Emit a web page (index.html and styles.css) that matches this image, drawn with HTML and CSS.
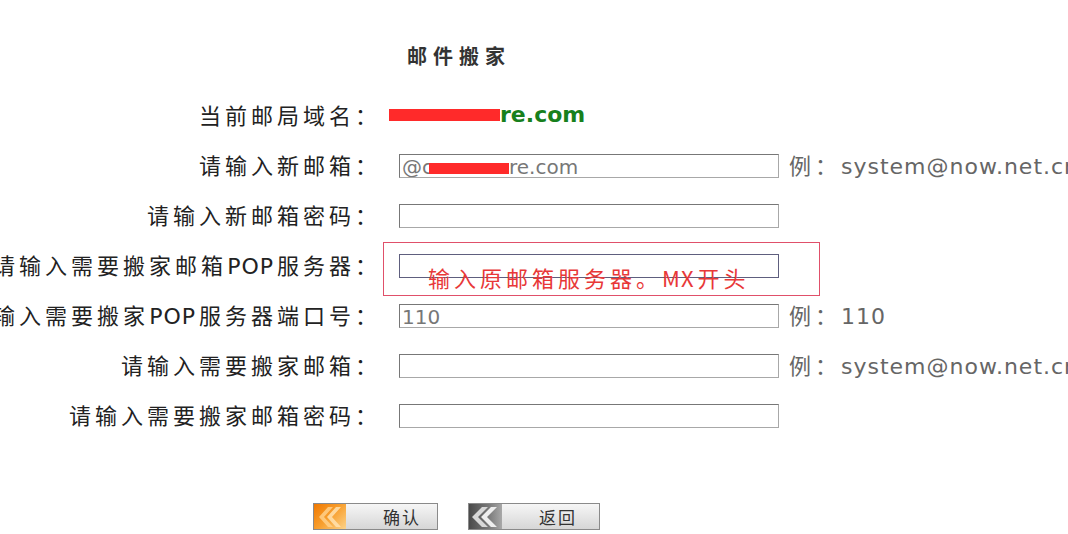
FILE: index.html
```html
<!DOCTYPE html>
<html lang="zh-CN">
<head>
    <meta charset="UTF-8">
    <title>邮件搬家</title>
    <link rel="stylesheet" href="styles.css">
</head>
<body>
    <div class="page">
        <h2 class="title">邮件搬家</h2>

        <div class="form">
            <div class="row">
                <div class="label"><span>当前邮局域名：</span></div>
                <div class="field">
                    <span class="domain"><span class="mask mask-domain"></span>re.com</span>
                </div>
            </div>

            <div class="row">
                <div class="label"><span>请输入新邮箱：</span></div>
                <div class="field">
                    <div class="box">@c<span class="mask mask-input"></span>re.com</div>
                    <span class="hint">例：<span class="latin">system@now.net.cn</span></span>
                </div>
            </div>

            <div class="row">
                <div class="label"><span>请输入新邮箱密码：</span></div>
                <div class="field">
                    <div class="box"></div>
                </div>
            </div>

            <div class="row">
                <div class="label"><span>请输入需要搬家邮箱<span class="latin">POP</span>服务器：</span></div>
                <div class="field">
                    <div class="box box-focus"></div>
                    <div class="note">
                        <span>输入原邮箱服务器。<span class="latin">MX</span>开头</span>
                    </div>
                </div>
            </div>

            <div class="row">
                <div class="label"><span>请输入需要搬家<span class="latin">POP</span>服务器端口号：</span></div>
                <div class="field">
                    <div class="box">110</div>
                    <span class="hint">例：<span class="latin">110</span></span>
                </div>
            </div>

            <div class="row">
                <div class="label"><span>请输入需要搬家邮箱：</span></div>
                <div class="field">
                    <div class="box"></div>
                    <span class="hint">例：<span class="latin">system@now.net.cn</span></span>
                </div>
            </div>

            <div class="row">
                <div class="label"><span>请输入需要搬家邮箱密码：</span></div>
                <div class="field">
                    <div class="box"></div>
                </div>
            </div>
        </div>

        <div class="actions">
            <button class="btn btn-ok">
                <span class="btn-icon">
                    <svg width="32" height="24" viewBox="0 0 32 24">
                        <polygon points="14,2 19,2 10,12 19,22 14,22 5,12" fill="#ffd08a" opacity="0.85"/>
                        <polygon points="22,2 27,2 18,12 27,22 22,22 13,12" fill="#ffe2b0" opacity="0.85"/>
                    </svg>
                </span>
                <span class="btn-text">确认</span>
            </button>
            <button class="btn btn-back">
                <span class="btn-icon">
                    <svg width="33" height="24" viewBox="0 0 33 24">
                        <polygon points="13,2 19,2 9,12 19,22 13,22 3,12" fill="#d8d8d8"/>
                        <polygon points="22,2 28,2 18,12 28,22 22,22 12,12" fill="#eeeeee"/>
                    </svg>
                </span>
                <span class="btn-text">返回</span>
            </button>
        </div>
    </div>
</body>
</html>
```

FILE: styles.css
```css
html, body {
    margin: 0;
    padding: 0;
    overflow: hidden;
    background: #ffffff;
}

body {
    font-family: "DejaVu Sans", "Noto Sans CJK SC", sans-serif;
    color: #222;
}

.page {
    width: 1068px;
    height: 534px;
}

.title {
    margin: 0;
    padding: 44px 0 0 407px;
    height: 24px;
    line-height: 24px;
    font-family: "Noto Sans CJK SC", sans-serif;
    font-size: 20px;
    font-weight: bold;
    letter-spacing: 6px;
    color: #333;
}

.form {
    margin-top: 23px;
}

.row {
    display: grid;
    grid-template-columns: 381px 1fr;
    column-gap: 18px;
    height: 50px;
    align-items: center;
}

.label {
    display: flex;
    justify-content: flex-end;
    margin-top: -4px;
    white-space: nowrap;
    font-family: "Noto Sans CJK SC", sans-serif;
    font-size: 22px;
    letter-spacing: 4px;
    color: #222;
}

.label .latin {
    font-family: "DejaVu Sans", sans-serif;
    letter-spacing: 1px;
    padding-right: 3px;
}

.field {
    position: relative;
    display: flex;
    align-items: center;
    gap: 10px;
    white-space: nowrap;
}

.domain {
    margin-left: -10px;
    margin-top: -4px;
    display: flex;
    align-items: center;
    font-size: 22px;
    font-weight: bold;
    color: #17801c;
}

.mask {
    display: inline-block;
    background: #ff2a2a;
}

.mask-domain {
    width: 111px;
    height: 12px;
    margin-top: 2px;
}

.mask-input {
    width: 80px;
    height: 11px;
    margin-left: -4px;
    vertical-align: baseline;
}

.box {
    box-sizing: border-box;
    width: 380px;
    height: 24px;
    padding: 0 2px;
    border: 1px solid #a8a8a8;
    border-top-color: #777;
    border-left-color: #777;
    line-height: 24px;
    font-size: 20px;
    color: #777;
    background: #fff;
    overflow: hidden;
}

.box-focus {
    border-color: #5e5e7e;
}

.hint {
    display: flex;
    align-items: baseline;
    margin-top: -4px;
    font-family: "Noto Sans CJK SC", sans-serif;
    font-size: 22px;
    letter-spacing: 4px;
    color: #666;
}

.hint .latin {
    font-family: "DejaVu Sans", sans-serif;
    letter-spacing: 1px;
}

.note {
    position: absolute;
    left: -16px;
    top: -12px;
    box-sizing: border-box;
    width: 437px;
    height: 54px;
    border: 1px solid #e0506a;
    pointer-events: none;
}

.note > span {
    position: absolute;
    left: 44px;
    top: 19px;
    font-family: "Noto Sans CJK SC", "DejaVu Sans", sans-serif;
    font-size: 22px;
    letter-spacing: 4px;
    color: #e83838;
    line-height: 30px;
}

.note .latin {
    letter-spacing: 1px;
    padding-right: 3px;
}

.actions {
    display: flex;
    gap: 30px;
    margin-top: 62px;
    padding-left: 313px;
}

.btn {
    display: flex;
    align-items: stretch;
    height: 27px;
    padding: 0;
    border: 1px solid #8a8a8a;
    background: linear-gradient(#f6f6f6, #d6d6d6);
    font-family: "Noto Sans CJK SC", sans-serif;
    font-size: 17px;
    color: #333;
    cursor: pointer;
}

.btn-ok {
    width: 125px;
}

.btn-back {
    width: 132px;
}

.btn-icon {
    display: flex;
    align-items: center;
}

.btn-ok .btn-icon {
    width: 32px;
    background: linear-gradient(135deg, #f07800 0%, #f8a030 50%, #fcd38a 100%);
}

.btn-back .btn-icon {
    width: 33px;
    background: linear-gradient(90deg, #4a4a4a 0%, #7a7a7a 60%, #a8a8a8 100%);
}

.btn-text {
    display: flex;
    align-items: center;
    letter-spacing: 2px;
}

.btn-ok .btn-text {
    padding-left: 37px;
}

.btn-back .btn-text {
    padding-left: 37px;
}
```
